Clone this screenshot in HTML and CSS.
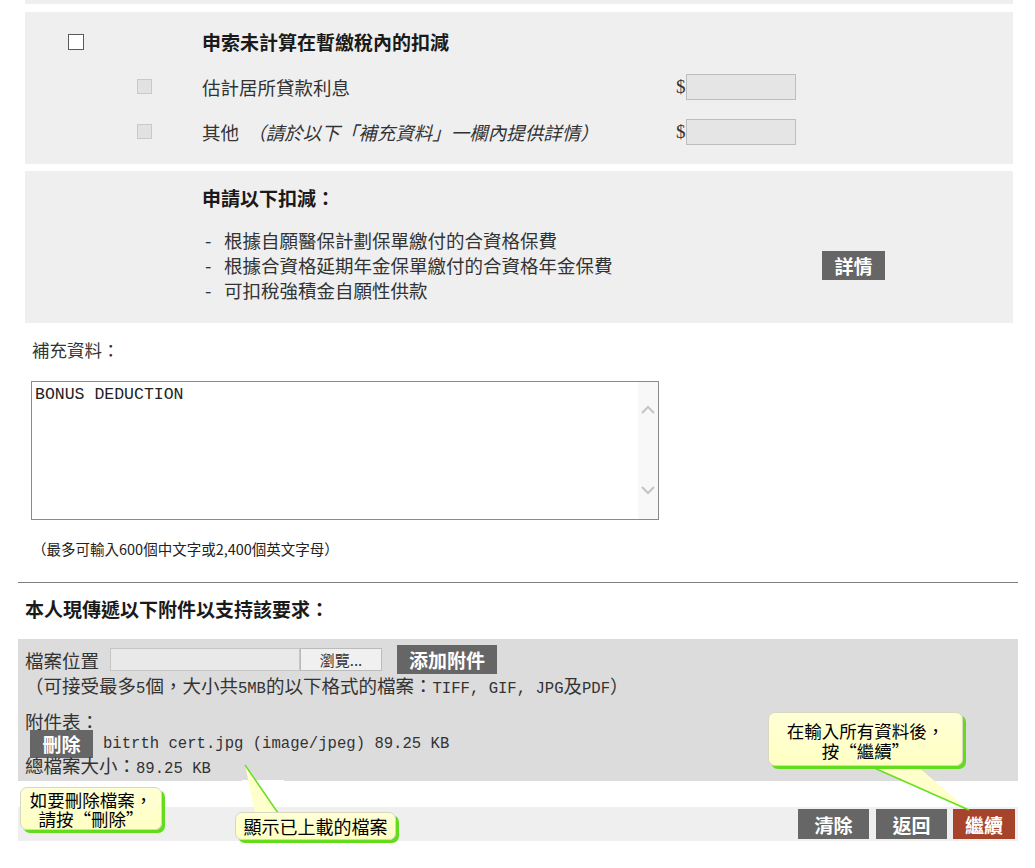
FILE: index.html
```html
<!DOCTYPE html>
<html lang="zh-Hant">
<head>
    <meta charset="UTF-8">
    <meta name="viewport" content="width=device-width, initial-scale=1.0">
    <title>申索扣減</title>
    <link rel="stylesheet" href="styles.css">
</head>
<body>
    <div class="page">
        <div class="panel panel-end"></div>

        <!-- 未計算在暫繳稅內的扣減 -->
        <div class="panel claim">
            <div class="claim-row">
                <span class="col-a"><input type="checkbox" class="chk-main"></span>
                <span class="col-b"></span>
                <span class="label strong">申索未計算在暫繳稅內的扣減</span>
            </div>
            <div class="claim-row">
                <span class="col-a"></span>
                <span class="col-b"><input type="checkbox" class="chk-off" disabled></span>
                <span class="label">估計居所貸款利息</span>
                <span class="amount">$<input type="text" class="amount-box" disabled></span>
            </div>
            <div class="claim-row">
                <span class="col-a"></span>
                <span class="col-b"><input type="checkbox" class="chk-off" disabled></span>
                <span class="label">其他 <em class="hint">（請於以下「補充資料」一欄內提供詳情）</em></span>
                <span class="amount">$<input type="text" class="amount-box" disabled></span>
            </div>
        </div>

        <!-- 申請以下扣減 -->
        <div class="panel apply">
            <h3 class="strong">申請以下扣減：</h3>
            <div class="apply-body">
                <ul class="dash-list">
                    <li>根據自願醫保計劃保單繳付的合資格保費</li>
                    <li>根據合資格延期年金保單繳付的合資格年金保費</li>
                    <li>可扣稅強積金自願性供款</li>
                </ul>
                <button class="btn btn-details">詳情</button>
            </div>
        </div>

        <div class="extra-label">補充資料：</div>
        <div class="textbox">
            <textarea class="textbox-input" readonly>BONUS DEDUCTION</textarea>
            <div class="scroll">
                <svg width="14" height="9" viewBox="0 0 14 9"><path d="M1 8 L7 2 L13 8" fill="none" stroke="#c4c4c4" stroke-width="2"/></svg>
                <svg width="14" height="9" viewBox="0 0 14 9"><path d="M1 1 L7 7 L13 1" fill="none" stroke="#c4c4c4" stroke-width="2"/></svg>
            </div>
        </div>
        <div class="note">（最多可輸入600個中文字或2,400個英文字母）</div>

        <hr class="divider">

        <h3 class="attach-title strong">本人現傳遞以下附件以支持該要求：</h3>

        <div class="upload">
            <div class="upload-row">
                <span>檔案位置</span>
                <span class="file-field"></span>
                <button class="btn-browse">瀏覽...</button>
                <button class="btn btn-add">添加附件</button>
            </div>
            <div class="line">（可接受最多<span class="mono">5</span>個，大小共<span class="mono">5MB</span>的以下格式的檔案：<span class="mono">TIFF, GIF, JPG</span>及<span class="mono">PDF</span>）</div>
            <div class="line list-title">附件表：</div>
            <div class="att-row">
                <button class="btn btn-del">刪除</button>
                <span class="mono att-name">bitrth cert.jpg (image/jpeg) 89.25 KB</span>
            </div>
            <div class="line">總檔案大小：<span class="mono">89.25 KB</span></div>
        </div>

        <div class="actions">
            <button class="btn btn-act">清除</button>
            <button class="btn btn-act">返回</button>
            <button class="btn btn-act btn-next">繼續</button>
        </div>

        <!-- 說明氣泡 -->
        <div class="tip tip-delete">如要刪除檔案，<br>請按“刪除”</div>

        <svg class="tail tail-file" width="46" height="52" viewBox="0 0 46 52">
            <rect x="2" y="18" width="42" height="3" fill="#fff"/>
            <polygon points="5,3 15,51 38,51" fill="#ffffcc"/>
            <line x1="5" y1="3" x2="38" y2="51" stroke="#66e01e" stroke-width="1.5"/>
        </svg>
        <div class="tip tip-file">顯示已上載的檔案</div>

        <svg class="tail tail-next" width="105" height="48" viewBox="0 0 105 48">
            <polygon points="4,2 50,2 101,45" fill="#ffffcc"/>
            <line x1="4" y1="2" x2="101" y2="45" stroke="#66e01e" stroke-width="1.5"/>
        </svg>
        <div class="tip tip-next">在輸入所有資料後，<br>按“繼續”</div>
    </div>
</body>
</html>
```

FILE: styles.css
```css
/* Estilos generales */
body {
    margin: 0;
    padding: 0;
    font-family: "Noto Sans CJK TC", "Noto Sans", sans-serif;
    color: #333;
    background-color: #fff;
}

.page {
    position: relative;
    width: 1000px;
    height: 868px;
    margin-left: 18px;
}

.strong {
    font-weight: bold;
    color: #1a1a1a;
    font-size: 19px;
}

.panel {
    background-color: #efefef;
    margin: 0 5px 0 7px;
}

.panel-end {
    height: 4px;
    margin-bottom: 8px;
}

/* Bloque de reclamación */
.claim {
    padding: 7px 0 10px;
    margin-bottom: 7px;
}

.claim-row {
    display: grid;
    grid-template-columns: 112px 65px 474px auto;
    align-items: center;
    height: 45px;
    font-size: 18.5px;
    line-height: 24px;
}

.col-a, .col-b {
    display: flex;
    align-items: center;
}

.chk-main, .chk-off {
    appearance: none;
    -webkit-appearance: none;
    box-sizing: border-box;
    margin: 0;
}

.chk-main {
    width: 16px;
    height: 16px;
    margin-left: 43px;
    background-color: #fff;
    border: 1px solid #5a5a5a;
}

.chk-off {
    width: 15px;
    height: 15px;
    background-color: #e2e2e2;
    border: 1px solid #c9c9c9;
}

.hint {
    font-style: italic;
    margin-left: 4px;
}

.amount {
    display: flex;
    align-items: center;
    font-family: "Liberation Serif", serif;
    font-size: 19px;
}

.amount-box {
    box-sizing: border-box;
    width: 110px;
    height: 26px;
    margin: 0;
    background-color: #e5e5e5;
    border: 1px solid #bdbdbd;
}

/* Deducciones */
.apply {
    padding: 14px 0 20px 177px;
}

.apply h3 {
    margin: 0 0 17px;
    line-height: 26px;
}

.apply-body {
    display: grid;
    grid-template-columns: 620px auto;
    align-items: center;
}

.dash-list {
    list-style-type: none;
    margin: 0;
    padding: 0;
    font-size: 18.5px;
    line-height: 25px;
}

.dash-list li::before {
    content: "-";
    display: inline-block;
    width: 19px;
    padding-left: 3px;
}

.btn {
    border: none;
    margin: 0;
    padding: 0;
    background-color: #666;
    color: #fff;
    font-family: "Noto Sans CJK TC", sans-serif;
    font-weight: bold;
    font-size: 19px;
    line-height: 1;
    cursor: pointer;
}

.btn-details {
    width: 63px;
    height: 29px;
}

/* Información adicional */
.extra-label {
    margin: 15px 0 0 14px;
    font-size: 17.5px;
    line-height: 24px;
}

.textbox {
    display: flex;
    box-sizing: border-box;
    width: 628px;
    height: 139px;
    margin: 19px 0 0 13px;
    border: 1px solid #8a8a8a;
    background-color: #fff;
}

.textbox-input {
    flex: 1;
    border: none;
    resize: none;
    margin: 0;
    padding: 4px 3px 3px;
    font-family: "Liberation Mono", monospace;
    font-size: 16.5px;
    line-height: 18px;
    color: #222;
    outline: none;
    overflow: hidden;
}

.scroll {
    width: 20px;
    background-color: #f8f8f8;
    display: flex;
    flex-direction: column;
    justify-content: space-between;
    align-items: center;
    padding: 23px 0 24px;
}

.note {
    margin: 19px 0 0 14px;
    font-size: 14.5px;
    line-height: 20px;
    color: #222;
}

.divider {
    margin: 23px 0 0;
    border: none;
    border-top: 1px solid #7f7f7f;
}

.attach-title {
    margin: 13px 0 0 7px;
    line-height: 26px;
}

/* Adjuntos */
.upload {
    margin-top: 17px;
    padding: 6px 0 5px 7px;
    background-color: #dcdcdc;
    font-size: 18.5px;
}

.upload-row {
    display: flex;
    align-items: center;
    height: 29px;
}

.file-field {
    box-sizing: border-box;
    width: 190px;
    height: 23px;
    margin-left: 11px;
    background-color: #e9e9e9;
    border: 1px solid #c6c6c6;
}

.btn-browse {
    box-sizing: border-box;
    width: 82px;
    height: 23px;
    margin: 0;
    padding: 0;
    background-color: #f0f0f0;
    border: 1px solid #bbb;
    font-family: "Noto Sans CJK TC", sans-serif;
    font-size: 15px;
    color: #333;
}

.btn-add {
    width: 100px;
    height: 29px;
    margin-left: 15px;
}

.line {
    height: 22px;
    line-height: 22px;
    white-space: nowrap;
}

.list-title {
    margin-top: 15px;
    height: 21px;
    line-height: 21px;
}

.mono {
    font-family: "Liberation Mono", monospace;
    font-size: 15.6px;
    line-height: 16px;
}

.att-row {
    display: flex;
    align-items: center;
    height: 23px;
}

.btn-del {
    width: 63px;
    height: 28px;
    margin-left: 5px;
}

.att-name {
    margin-left: 10px;
}

.upload .line:last-child {
    height: 21px;
    line-height: 21px;
}

/* Botones de acción */
.actions {
    display: flex;
    justify-content: flex-end;
    align-items: center;
    gap: 7px;
    height: 34px;
    margin-top: 26px;
    padding-right: 3px;
    background-color: #efefef;
}

.btn-act {
    width: 71px;
    height: 30px;
}

.btn-next {
    width: 62px;
    margin-left: -1px;
    background-color: #a6432b;
}

/* Globos de ayuda */
.tip {
    position: absolute;
    box-sizing: border-box;
    background: linear-gradient(#ffffd6, #ffffc4);
    border: 1px solid #d8d8c0;
    border-radius: 7px;
    box-shadow: 3px 3px 0 #62dc1c;
    color: #000;
    font-size: 17.5px;
    line-height: 19px;
    text-align: center;
}

.tip-delete {
    left: 2px;
    top: 787px;
    width: 142px;
    height: 43px;
    padding-top: 2px;
}

.tip-file {
    left: 217px;
    top: 812px;
    width: 161px;
    height: 28px;
    padding-top: 4px;
    font-size: 18px;
}

.tip-next {
    left: 750px;
    top: 712px;
    width: 195px;
    height: 54px;
    padding-top: 8px;
    line-height: 20px;
}

.tail {
    position: absolute;
}

.tail-file {
    left: 222px;
    top: 762px;
}

.tail-next {
    left: 850px;
    top: 765px;
}
```
